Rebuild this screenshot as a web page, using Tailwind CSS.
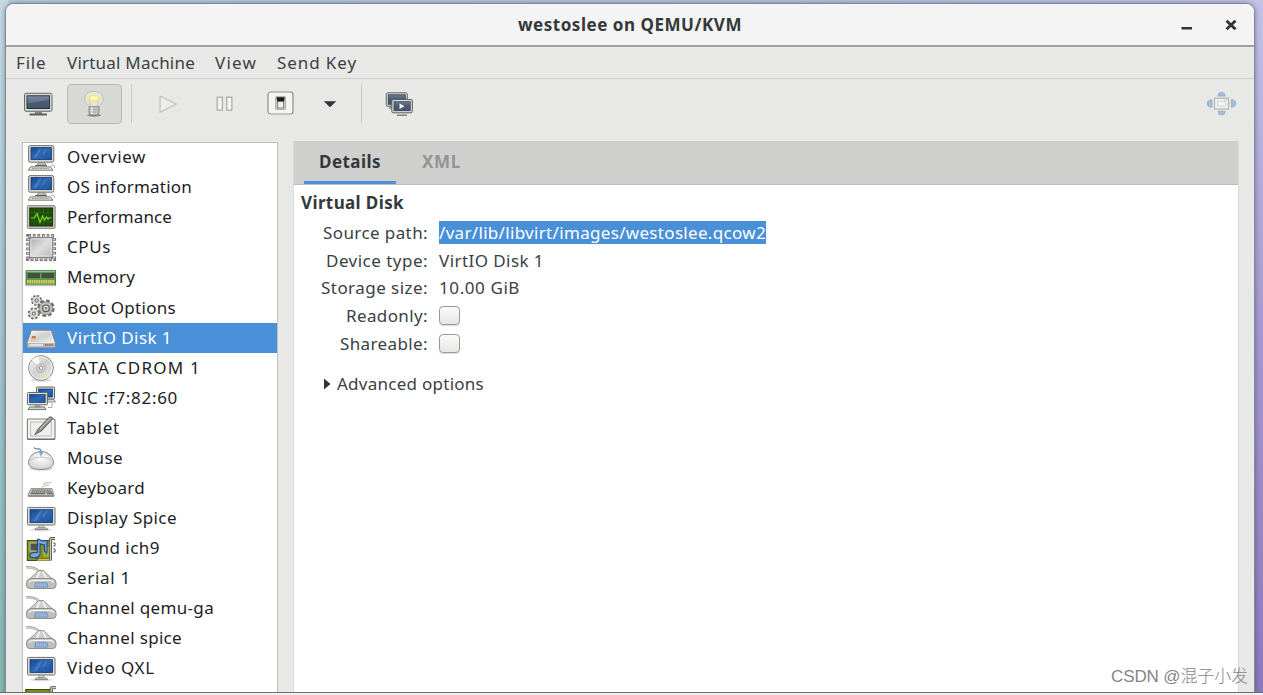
<!DOCTYPE html>
<html lang="en">
<head>
    <meta charset="UTF-8">
    <meta name="viewport" content="width=device-width, initial-scale=1.0">
    <title>westoslee on QEMU/KVM</title>
    <script src="https://cdn.jsdelivr.net/npm/@tailwindcss/browser@4"></script>
</head>
<body class="h-[695px] overflow-hidden bg-[#f1f1f1] font-['Noto_Sans','Noto_Sans_CJK_SC',sans-serif] text-[17px] text-[#3a4144]">

    <!-- Shared icon shapes -->
    <svg class="absolute h-0 w-0">
        <defs>
            <linearGradient id="blue" x1="0" y1="0" x2="1" y2="1">
                <stop offset="0" stop-color="#174a94"/><stop offset=".5" stop-color="#2e68b4"/><stop offset="1" stop-color="#1d509c"/>
            </linearGradient>
            <linearGradient id="slate" x1="0" y1="0" x2="0" y2="1">
                <stop offset="0" stop-color="#6d7f98"/><stop offset=".45" stop-color="#4b5c74"/><stop offset="1" stop-color="#43536a"/>
            </linearGradient>
            <linearGradient id="metal" x1="0" y1="0" x2="1" y2="1">
                <stop offset="0" stop-color="#f2f2f0"/><stop offset=".5" stop-color="#cfcfcd"/><stop offset="1" stop-color="#eeeeec"/>
            </linearGradient>
            <linearGradient id="chip" x1="0" y1="0" x2="1" y2="1">
                <stop offset="0" stop-color="#a9a9a9"/><stop offset=".5" stop-color="#dedede"/><stop offset="1" stop-color="#b5b5b5"/>
            </linearGradient>
            <radialGradient id="shine" cx=".5" cy=".35" r=".7">
                <stop offset="0" stop-color="#ffffff"/><stop offset="1" stop-color="#cfcfcc"/>
            </radialGradient>
        </defs>

        <symbol id="i-computer" viewBox="0 0 32 30">
            <rect x="3.6" y="2.6" width="25.2" height="16.6" rx="1.6" fill="#d6d7d2" stroke="#72746e"/>
            <rect x="6" y="4.6" width="20.4" height="12" fill="url(#blue)" stroke="#123a78" stroke-width=".8"/>
            <path d="M9 14L14 5.500H17L11 15ZM17 12L20 6H21.500L18.500 12Z" fill="#8ab0e0" opacity=".3"/>
            <path d="M13 19.500H20L21 22.300H12Z" fill="#b9bab5" stroke="#83857f" stroke-width=".7"/>
            <path d="M10 22.500H22" stroke="#63655f" stroke-width="1.200"/>
            <path d="M5.500 23.800H25.500L28 27.200H3.300Z" fill="#e3e4df" stroke="#70726c" stroke-width=".9"/>
            <path d="M7 25.400H24" stroke="#90928c" stroke-width="1" stroke-dasharray="2 .7"/>
            <path d="M26 22Q30 22 29.500 25" fill="none" stroke="#999b95" stroke-width=".9"/>
        </symbol>

        <symbol id="i-performance" viewBox="0 0 32 30">
            <rect x="2.300" y="2.600" width="27.800" height="22.800" rx="1" fill="#c8cac4" stroke="#868882"/>
            <rect x="4.800" y="5" width="22.800" height="18" fill="#204b0c" stroke="#15300a"/>
            <path d="M5 9.500H27.500M5 14H27.500M5 18.500H27.500M9.500 5V23M14 5V23M18.500 5V23M23 5V23" stroke="#336a1a" stroke-width=".6"/>
            <path d="M6 15H9.500L12 10.500L15 19.500L17.500 13L19.500 17L21.500 14L23 16L24 15H26.500" fill="none" stroke="#73dc20" stroke-width="1.200"/>
        </symbol>

        <symbol id="i-cpu" viewBox="0 0 32 30">
            <rect x="4" y="25" width="27" height="3.500" rx="1.500" fill="#ddd" opacity=".7"/>
            <rect x="3.200" y="3.200" width="25.800" height="22.600" fill="none" stroke="#767676" stroke-width="4.200" stroke-dasharray="2.800 1.800"/>
            <rect x="3.200" y="3.200" width="25.800" height="22.600" fill="none" stroke="#d2d2d2" stroke-width="2" stroke-dasharray="1.200 3.400" stroke-dashoffset="-.8"/>
            <rect x="4.500" y="4.500" width="23.200" height="20" rx="1.500" fill="url(#chip)" stroke="#858585"/>
            <rect x="6" y="6" width="20.200" height="17" rx="1" fill="none" stroke="#e4e4e4" stroke-width=".8"/>
        </symbol>

        <symbol id="i-memory" viewBox="0 0 32 30">
            <path d="M1 7.500H30.500V22.500H1Z" fill="#5b9a55" stroke="#467342" stroke-width=".9"/>
            <path d="M1.500 8.300H30" stroke="#a7cba2" stroke-width="1"/>
            <rect x="3" y="10.500" width="11.500" height="4.300" fill="#4b4d49" stroke="#2f332d" stroke-width=".5"/>
            <rect x="17" y="10.500" width="11.500" height="4.300" fill="#4b4d49" stroke="#2f332d" stroke-width=".5"/>
            <path d="M2 18.700H30" stroke="#e0cb52" stroke-width="3.600" stroke-dasharray="1.700 .6"/>
            <path d="M1 22.500H30.500" stroke="#bfbfbb" stroke-width="1.500"/>
        </symbol>

        <symbol id="i-boot" viewBox="0 0 32 30">
            <circle cx="11.500" cy="7.500" r="4.500" fill="#d0d1cd" stroke="#676965" stroke-width="2.200" stroke-dasharray="2.200 1.300"/>
            <circle cx="11.500" cy="7.500" r="4" fill="#d6d7d3"/>
            <circle cx="11.500" cy="7.500" r="1.500" fill="#f4f4f4" stroke="#585a55"/>
            <circle cx="21" cy="15.300" r="7.200" fill="#c1c2be" stroke="#676965" stroke-width="3" stroke-dasharray="3.400 2.250"/>
            <circle cx="21" cy="15.300" r="6.500" fill="#bfc0bc" stroke="#898b86" stroke-width=".7"/>
            <circle cx="21" cy="15.300" r="3.300" fill="#ddd" stroke="#555752" stroke-width="1.200"/>
            <circle cx="21" cy="15.300" r="1.200" fill="#777974"/>
            <circle cx="8.800" cy="20.500" r="4.900" fill="#d0d1cd" stroke="#676965" stroke-width="2.200" stroke-dasharray="2.400 1.450"/>
            <circle cx="8.800" cy="20.500" r="4.400" fill="#d6d7d3"/>
            <circle cx="8.800" cy="20.500" r="1.500" fill="#f4f4f4" stroke="#585a55"/>
        </symbol>

        <symbol id="i-disk" viewBox="0 0 32 30">
            <path d="M7.500 7.200H25Q26 7.200 26.500 8.300L30.300 19.500V23.500Q30.300 24.800 29 24.800H3.500Q2.200 24.800 2.200 23.500V19.500L6 8.300Q6.500 7.200 7.500 7.200Z" fill="#eeefec" stroke="#83817d"/>
            <path d="M7.600 8.500H24.800L28.500 19.300H4Z" fill="url(#metal)"/>
            <path d="M2.800 20H29.800V23.800H2.800Z" fill="#b7b5b0"/>
            <path d="M4.500 22H18" stroke="#fff" stroke-width="1.200"/>
            <path d="M20 22H28" stroke="#73716d" stroke-width="2" stroke-dasharray="1 .8"/>
            <path d="M7 13H11L10.400 15.500H6.200Z" fill="#e0702a"/>
        </symbol>

        <symbol id="i-cd" viewBox="0 0 32 30">
            <ellipse cx="16" cy="27" rx="10" ry="1.800" fill="#ddd"/>
            <circle cx="16" cy="15" r="12.400" fill="url(#metal)" stroke="#8b8d88"/>
            <path d="M16 15L7 6.500A12 12 0 0 1 13 3.300Z" fill="#fff" opacity=".8"/>
            <path d="M16 15L25 23.500A12 12 0 0 1 20 26.300Z" fill="#e4e0b8" opacity=".9"/>
            <circle cx="16" cy="15" r="11.200" fill="none" stroke="#f4f4f3" stroke-width=".8"/>
            <circle cx="16" cy="15" r="4.200" fill="#d6d7d4" stroke="#a0a29d" stroke-width=".8"/>
            <circle cx="16" cy="15" r="1.800" fill="#fff" stroke="#858782" stroke-width=".9"/>
        </symbol>

        <symbol id="i-nic" viewBox="0 0 32 30">
            <rect x="11.500" y="4" width="18" height="12" rx="1" fill="#dedfda" stroke="#666862"/>
            <rect x="13.500" y="6" width="14" height="8" fill="url(#blue)" stroke="#123a78" stroke-width=".7"/>
            <path d="M21 16.500H29L30.500 19H20Z" fill="#d4d5d0" stroke="#767872" stroke-width=".8"/>
            <rect x="2.400" y="9.500" width="20" height="12.300" rx="1" fill="#dedfda" stroke="#666862"/>
            <rect x="4.600" y="11.500" width="15.600" height="8" fill="url(#blue)" stroke="#123a78" stroke-width=".7"/>
            <path d="M9.500 22H15.500V24H9.500Z" fill="#9c9e98"/>
            <path d="M4.500 24H19.500L21 26.600H3Z" fill="#d4d5d0" stroke="#686a64" stroke-width=".9"/>
            <path d="M23 24.500H27V20" fill="none" stroke="#aaaca6"/>
        </symbol>

        <symbol id="i-tablet" viewBox="0 0 32 30">
            <rect x="2.400" y="6" width="27.600" height="20.300" rx="1" fill="#f4f5f3" stroke="#7c7e79" stroke-width="1.100"/>
            <path d="M2.500 26.200H30" stroke="#5f615c" stroke-width="1.100"/>
            <rect x="5.500" y="9" width="21" height="14" fill="#eff0ee" stroke="#c4c5c2" stroke-width="1.200"/>
            <path d="M10 21.500L13.500 15.500L24.500 4Q27 3.300 27.800 5.500L17 17.500Z" fill="#8d8f8a" stroke="#51534f" stroke-width=".9"/>
            <path d="M15 16L25.500 5" stroke="#d0d1cd" stroke-width="1"/>
        </symbol>

        <symbol id="i-mouse" viewBox="0 0 32 30">
            <ellipse cx="16" cy="25.500" rx="12" ry="2.500" fill="#dcdcda"/>
            <path d="M9 4.500Q10 6.500 13 5.800Q16 5.500 15.800 9" fill="none" stroke="#73756f" stroke-width="1.200"/>
            <path d="M16 8.500C23 8.500 28.500 14 28.500 19.500C28.500 24 24 26.400 16 26.400S3.500 24 3.500 19.500C3.500 14 9 8.500 16 8.500Z" fill="url(#shine)" stroke="#888a84"/>
            <path d="M4.500 17.500Q16 10.500 27.500 17.500M16 11V15" fill="none" stroke="#c2c3c0" stroke-width=".9"/>
            <path d="M16 6.800L18.200 9.300L16 13L13.800 9.300Z" fill="#72a8e4"/>
        </symbol>

        <symbol id="i-keyboard" viewBox="0 0 32 30">
            <path d="M17 14V12.500Q25 11.500 24 10.200H18Q17 9.500 20 8.800L27 8" fill="none" stroke="#c4c5c2" stroke-width=".9"/>
            <path d="M6 14.500H27L29 20.500V22H3.200V20.500Z" fill="#c6c7c3" stroke="#858782" stroke-width=".8"/>
            <path d="M7 16.200H26M6.300 18H27" stroke="#6d6f6a" stroke-width="1.300" stroke-dasharray="1.600 .5"/>
            <path d="M5.500 19.700H20M22 19.700H28" stroke="#6d6f6a" stroke-width="1.200"/>
            <path d="M3.200 22.100H29" stroke="#6c6e69" stroke-width="1.100"/>
        </symbol>

        <symbol id="i-display" viewBox="0 0 32 30">
            <ellipse cx="16" cy="25.800" rx="11" ry="1.700" fill="#e3e3e3"/>
            <rect x="2.500" y="3.400" width="27.500" height="17.600" rx="1.200" fill="#dcddd8" stroke="#73756f"/>
            <rect x="5" y="5.700" width="22.500" height="12.800" fill="url(#blue)" stroke="#123a78" stroke-width=".8"/>
            <path d="M8.500 17L15 6.500H18L11.500 17ZM17 13L21 6.500H22.500L19 13Z" fill="#83abe0" opacity=".32"/>
            <path d="M13.700 21.300H19V24H13.700Z" fill="#d5d6d1" stroke="#878983" stroke-width=".7"/>
            <path d="M11.500 24H21Q22.500 24.300 22.500 25.600H10Q10 24.300 11.500 24Z" fill="#e4e5e0" stroke="#777973" stroke-width=".9"/>
        </symbol>

        <symbol id="i-sound" viewBox="0 0 32 30">
            <path d="M2.300 6.500H26V24.500H12V26.500H2.300Z" fill="#82921f" stroke="#445010" stroke-width="1.100"/>
            <path d="M13 24.500H25V26.500H13Z" fill="#dcc04a" stroke="#6a621d" stroke-width=".6"/>
            <path d="M19 16V22H23V13" fill="none" stroke="#b6c256" stroke-width="1.200"/>
            <rect x="5" y="9" width="8" height="8" fill="#51534e" stroke="#c3c6b8" stroke-width="1"/>
            <path d="M12.500 18.500V5.500Q13 4.500 14.500 5.500Q17 7.500 20.500 6.500L22 7V18.500L19.500 17.500V10.800Q17 11 15 9.800V20.500Q14 23.700 8.500 23.800Q4 23.300 4.600 20.800Q7 18 12.500 18.500Z" fill="#7ba7de" stroke="#204a87" stroke-width="1.100"/>
            <path d="M30 4.500H26.500Q25.500 4.500 25.500 5.500V26.500" fill="none" stroke="#555752" stroke-width="3"/>
            <path d="M30 4.500H26.500Q25.500 4.500 25.500 5.500V26.500" fill="none" stroke="#cfd0cc" stroke-width="1.200"/>
            <path d="M28.300 9H30V12H28.300M28.300 15H30V18H28.300" fill="none" stroke="#555752" stroke-width="1"/>
        </symbol>

        <symbol id="i-serial" viewBox="0 0 32 30">
            <path d="M1 3.300Q11 3 14.500 8" fill="none" stroke="#a4a5a2" stroke-width="2.600"/>
            <path d="M1 3.300Q11 3 14.500 8" fill="none" stroke="#d0d0ce" stroke-width="1.200"/>
            <path d="M13.500 6.500H18.500L28 15.500H4Z" fill="#cfd0cd" stroke="#989a95"/>
            <path d="M14.500 8L11.500 15M18 8L21.500 15" stroke="#f7f7f6" stroke-width="1.600"/>
            <path d="M5.500 14.500H27Q31 15.500 31 18.500V21.500Q31 24.500 27.500 24.500H5Q1.500 24.500 1.500 21.500V18.500Q1.500 15.500 5.500 14.500Z" fill="#bfc0bd" stroke="#8d8f8b"/>
            <path d="M4 18.500Q5 16.500 8 16.300H24.500Q28 16.500 28.500 18.500" fill="none" stroke="#f3f3f2" stroke-width="1.300"/>
            <path d="M10.500 18.800H22L23 23H9.500Z" fill="#85a8d8" stroke="#6884ad" stroke-width=".8"/>
            <path d="M11 20H22M10.500 22H22.500" stroke="#c3d5ee" stroke-width=".8" stroke-dasharray="1.300 .8"/>
        </symbol>

        <symbol id="i-card" viewBox="0 0 32 30">
            <path d="M.8 5.500H26V24H.8Z" fill="#7a8a1c" stroke="#3d480e" stroke-width="1.100"/>
            <path d="M31 3.500H28Q26.300 3.500 26.300 5V26" fill="none" stroke="#555752" stroke-width="3.200"/>
            <path d="M31 3.500H28Q26.300 3.500 26.300 5V26" fill="none" stroke="#c8c9c5" stroke-width="1.300"/>
        </symbol>
    </svg>

    <!-- Desktop behind the window -->
    <div class="relative h-[693px] overflow-hidden border-b border-[#6e6e6e] bg-gradient-to-r from-[#b7cfdb] via-[#b4c5df] to-[#c3c2e8] pt-[3px]">
        <div class="absolute top-0 left-0 h-full w-[8px] bg-gradient-to-b from-[#c5dbe3] via-[#a3c6ce] to-[#86bab2]"></div>
        <div class="absolute top-0 right-0 h-full w-[11px] bg-gradient-to-b from-[#c3c2e8] via-[#a597cf] to-[#8e78bb]"></div>

        <!-- Window -->
        <div class="relative ml-[5px] flex h-[700px] w-[1250px] flex-col overflow-hidden rounded-t-[9px] border border-[#828a98] bg-[#e8e8e6] shadow-[0_0_5px_rgba(40,50,80,0.5)]">

            <!-- Title bar -->
            <header class="flex h-[43px] shrink-0 items-center border-b-2 border-[#a0a19c] bg-[#f4f4f4] pl-[512px]">
                <h1 class="fit font-bold text-[#33393b]" data-width="224">westoslee on QEMU/KVM</h1>
                <div class="ml-auto flex items-center gap-[32px] pr-[17px]">
                    <svg class="h-3 w-3" viewBox="0 0 12 12"><path d="M.5 9.300H11" stroke="#2e3436" stroke-width="2.400"/></svg>
                    <svg class="h-3 w-3" viewBox="0 0 12 12"><path d="M1.500 1.800L10.500 10.200M10.500 1.800L1.500 10.200" stroke="#2e3436" stroke-width="2.800"/></svg>
                </div>
            </header>

            <!-- Menu bar -->
            <nav class="flex h-[32px] shrink-0 items-center border-b border-[#d0d0cd] pl-[10px]">
                <a class="fit w-[51px]" data-width="30.500">File</a>
                <a class="fit w-[148px]" data-width="128">Virtual Machine</a>
                <a class="fit w-[62px]" data-width="42">View</a>
                <a class="fit" data-width="80">Send Key</a>
            </nav>

            <!-- Toolbar -->
            <div class="flex h-[63px] shrink-0 items-start pt-[5px] pl-[17px]">
                <svg class="h-10 w-8" viewBox="0 0 32 40">
                    <rect x="1.500" y="9.300" width="27.500" height="18" rx="1.500" fill="#d5d6d1" stroke="#686a65"/>
                    <rect x="4" y="11.800" width="22.500" height="12.700" fill="url(#slate)" stroke="#2a374a"/>
                    <path d="M4.500 12.300H26V15Q15 19 4.500 19Z" fill="#8c9bb0" opacity=".4"/>
                    <path d="M12 27.800H19V30H12Z" fill="#85878b"/>
                    <path d="M6.500 30.500H24" stroke="#5d5f5b" stroke-width="2"/>
                </svg>
                <button class="ml-[12px] flex h-10 w-[55px] justify-center rounded-[4px] border border-[#b8b8b5] bg-[#d8d8d5] pr-[2px]">
                    <svg class="h-[38px] w-8" viewBox="0 0 32 38">
                        <ellipse cx="16" cy="30.200" rx="7" ry="1.500" fill="#555" opacity=".6"/>
                        <path d="M16 6.300C22 6.300 25.300 9.800 25.300 14C25.300 18 21.500 19.500 20.500 22H11.500C10.500 19.500 6.700 18 6.700 14C6.700 9.800 10 6.300 16 6.300Z" fill="#e5e5de" stroke="#bcbcb6"/>
                        <path d="M13 21.500L10.500 13M19 21.500L21.500 13" stroke="#c6c6be" stroke-width=".9"/>
                        <ellipse cx="16" cy="13.500" rx="6" ry="3.500" fill="#f1e878"/>
                        <ellipse cx="16" cy="13" rx="4" ry="1.800" fill="#fffbd0"/>
                        <path d="M11 21.800H21V28Q20 30 18 30H14Q12 30 11 28Z" fill="#c9cac6" stroke="#7f817c" stroke-width=".9"/>
                        <path d="M14 22.500V29" stroke="#f7f7f6" stroke-width="1.800"/>
                        <path d="M11.500 24.500H20.500M11.500 27H20.500" stroke="#999b96" stroke-width=".7"/>
                    </svg>
                </button>
                <div class="ml-[9px] h-[39px] w-px bg-[#c9c9c6]"></div>
                <svg class="ml-[26px] h-10 w-5" viewBox="0 0 20 40">
                    <path d="M2 12L18.300 20L2 28.300Z" fill="#ededeb" stroke="#bdbeba" stroke-width="1.200" stroke-linejoin="round"/>
                </svg>
                <svg class="ml-[37px] h-10 w-5" viewBox="0 0 20 40">
                    <rect x="2.200" y="13.200" width="5.200" height="13" fill="#f3f3f1" stroke="#a9aaa6" stroke-width="1.200"/>
                    <rect x="11.700" y="13.200" width="5.200" height="13" fill="#f3f3f1" stroke="#a9aaa6" stroke-width="1.200"/>
                </svg>
                <svg class="ml-[31px] h-10 w-8" viewBox="0 0 32 40">
                    <rect x="2" y="8" width="25" height="22" rx="2.800" fill="#f4f4f3" stroke="#8c8e89" stroke-width="1.200"/>
                    <path d="M4 29.800H25" stroke="#c9c9c6" stroke-width="1.200"/>
                    <rect x="9.500" y="12.500" width="10" height="13" rx="1" fill="#c6c6c4" stroke="#a6a7a4" stroke-width=".8"/>
                    <path d="M10.500 13.300H18.700L17.700 19H11.500Z" fill="#17191a"/>
                    <rect x="11.700" y="17.500" width="5.800" height="6.500" fill="#efefed" stroke="#70726e" stroke-width=".8"/>
                </svg>
                <svg class="ml-[24px] h-10 w-4" viewBox="0 0 16 40">
                    <path d="M1.800 17.300H14.200L8 23.300Z" fill="#2e3436"/>
                </svg>
                <div class="ml-[23px] h-[39px] w-px bg-[#c9c9c6]"></div>
                <svg class="ml-[23px] h-10 w-[30px]" viewBox="0 0 30 40">
                    <rect x="1.300" y="8.800" width="21" height="13.500" rx="1.500" fill="#d4d5d1" stroke="#666863"/>
                    <rect x="3.300" y="10.800" width="17" height="9.500" fill="url(#slate)" stroke="#35445a" stroke-width=".8"/>
                    <path d="M4 24H9" stroke="#8a8c88" stroke-width="1.500"/>
                    <rect x="6.800" y="15.500" width="20.500" height="13.300" rx="1.500" fill="#dcddd9" stroke="#5c5e59"/>
                    <rect x="9" y="17.700" width="16.200" height="9" fill="url(#slate)" stroke="#35445a" stroke-width=".8"/>
                    <path d="M14.500 19.500L19.500 22.200L14.500 25Z" fill="#f4f4f4"/>
                    <path d="M12 31.300H22" stroke="#7f817d" stroke-width="1.600"/>
                </svg>
                <svg class="mr-[16px] ml-auto h-10 w-8" viewBox="0 0 32 40">
                    <g fill="#a6bcd8" stroke="#8fa9ca" stroke-width=".8">
                        <path d="M12 12Q12 8.200 15.500 8.200T19.200 12Z"/>
                        <path d="M12 27.200Q12 31 15.500 31T19.200 27.200Z"/>
                        <path d="M6 15.700Q1.300 16 1.300 19.500T6 23.300Z"/>
                        <path d="M25.300 15.700Q29.700 16 29.700 19.500T25.300 23.300Z"/>
                    </g>
                    <rect x="8.500" y="14.200" width="14" height="10.800" fill="#efefee" stroke="#b5b6b3" stroke-width="1.200"/>
                    <rect x="11.500" y="17.800" width="8" height="4" fill="#fafafa" stroke="#d0d0ce" stroke-width=".9"/>
                    <path d="M18.500 16H21" stroke="#bebfbc"/>
                </svg>
            </div>

            <!-- Content -->
            <main class="flex min-h-0 grow items-stretch pl-[16px]">

                <!-- Hardware list -->
                <ul id="hardware" class="w-[256px] shrink-0 overflow-hidden border border-[#bfbfbc] bg-white text-[#1c1e1f]"></ul>

                <!-- Notebook -->
                <section class="-mt-px ml-[15px] w-[946px] shrink-0 border-x border-[#dcdcda] bg-white">
                    <div class="flex h-[44px] border-b border-[#bdbdba] bg-[#cfcfcd] pl-[10px] font-bold">
                        <div class="flex h-[43px] w-[92px] items-center border-b-[3px] border-[#4a90d9] pt-[2px] pl-[15px] text-[#33393b]">
                            <span class="fit" data-width="62">Details</span>
                        </div>
                        <div class="flex h-[40px] items-center pt-[2px] pl-[26px] text-[#929595]">
                            <span class="fit" data-width="39">XML</span>
                        </div>
                    </div>

                    <div class="px-[7px] pt-[4px]">
                        <h2 class="fit leading-[28px] font-bold text-[#33393b]" data-width="103">Virtual Disk</h2>
                        <dl class="mt-[2px] grid grid-cols-[127px_1fr] gap-x-[11px] leading-[27.700px]">
                            <dt class="fit justify-self-end" data-width="105">Source path:</dt>
                            <dd class="flex items-center"><span class="fit bg-[#4a90d9] leading-[23px] text-white" data-width="327">/var/lib/libvirt/images/westoslee.qcow2</span></dd>
                            <dt class="fit justify-self-end" data-width="102">Device type:</dt>
                            <dd><span class="fit" data-width="105">VirtIO Disk 1</span></dd>
                            <dt class="fit justify-self-end" data-width="107">Storage size:</dt>
                            <dd><span class="fit" data-width="81">10.00 GiB</span></dd>
                            <dt class="fit justify-self-end" data-width="82">Readonly:</dt>
                            <dd class="flex items-center"><span class="h-[19px] w-[21px] rounded-[4px] border border-[#9a9b97] bg-gradient-to-b from-[#fafafa] to-[#e7e7e5] shadow-[0_1px_1px_rgba(0,0,0,0.15)]"></span></dd>
                            <dt class="fit justify-self-end" data-width="88">Shareable:</dt>
                            <dd class="flex items-center"><span class="h-[19px] w-[21px] rounded-[4px] border border-[#9a9b97] bg-gradient-to-b from-[#fafafa] to-[#e7e7e5] shadow-[0_1px_1px_rgba(0,0,0,0.15)]"></span></dd>
                        </dl>
                        <div class="mt-[12.500px] flex items-center gap-[6px] pl-[23px] leading-[28px]">
                            <svg class="h-3 w-[7px]" viewBox="0 0 7 12"><path d="M0 .500L6.500 6L0 11.500Z" fill="#2e3436"/></svg>
                            <span class="fit" data-width="147">Advanced options</span>
                        </div>
                    </div>
                </section>
            </main>
        </div>

        <!-- Watermark -->
        <div class="fit absolute top-[664px] left-[1111px] font-['Liberation_Sans','Noto_Sans_CJK_SC',sans-serif] text-[17px] leading-[26px] font-light text-[#858585]" data-width="137">CSDN @混子小发</div>
    </div>

    <script>
        const hardware = [
            { label: 'Overview', icon: 'i-computer', width: 79 },
            { label: 'OS information', icon: 'i-computer', width: 125 },
            { label: 'Performance', icon: 'i-performance', width: 105 },
            { label: 'CPUs', icon: 'i-cpu', width: 44 },
            { label: 'Memory', icon: 'i-memory', width: 68 },
            { label: 'Boot Options', icon: 'i-boot', width: 109 },
            { label: 'VirtIO Disk 1', icon: 'i-disk', width: 105, selected: true },
            { label: 'SATA CDROM 1', icon: 'i-cd', width: 134 },
            { label: 'NIC :f7:82:60', icon: 'i-nic', width: 111 },
            { label: 'Tablet', icon: 'i-tablet', width: 53 },
            { label: 'Mouse', icon: 'i-mouse', width: 56 },
            { label: 'Keyboard', icon: 'i-keyboard', width: 78 },
            { label: 'Display Spice', icon: 'i-display', width: 110 },
            { label: 'Sound ich9', icon: 'i-sound', width: 93 },
            { label: 'Serial 1', icon: 'i-serial', width: 64 },
            { label: 'Channel qemu-ga', icon: 'i-serial', width: 147 },
            { label: 'Channel spice', icon: 'i-serial', width: 115 },
            { label: 'Video QXL', icon: 'i-display', width: 88 },
            { label: '', icon: 'i-card', width: 0 }
        ];

        document.getElementById('hardware').innerHTML = hardware.map(item => `
            <li class="flex h-[30.06px] items-center gap-[10px] pl-[2px] ${item.selected ? 'bg-[#4a90d9] text-white' : ''}">
                <svg class="h-[30px] w-8 shrink-0"><use href="#${item.icon}"/></svg>
                <span class="fit -mt-[2px]" data-width="${item.width}">${item.label}</span>
            </li>
        `).join('');

        function fitLabels() {
            document.querySelectorAll('.fit').forEach(el => {
                const target = Number(el.dataset.width);
                const length = el.textContent.length;
                if (!target || !length) return;
                el.style.whiteSpace = 'nowrap';
                el.style.letterSpacing = '0px';
                const range = document.createRange();
                range.selectNodeContents(el);
                el.style.letterSpacing = (target - range.getBoundingClientRect().width) / length + 'px';
            });
        }

        fitLabels();
        window.addEventListener('load', fitLabels);
        document.fonts.ready.then(fitLabels);
    </script>
</body>
</html>
